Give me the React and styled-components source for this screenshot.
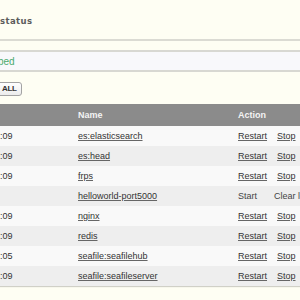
import React from 'react'
import styled, {createGlobalStyle} from 'styled-components'

const GlobalStyle = createGlobalStyle`
  html, body {
    margin: 0;
    padding: 0;
    background: #fefef3;
  }
  body {
    font-family: "Liberation Sans", Arial, sans-serif;
    overflow: hidden;
  }
`

const Page = styled.div`
  width: 300px;
  height: 300px;
  overflow: hidden;
  display: flex;
  flex-direction: column;
`

const Title = styled.h2`
  margin: 0;
  height: 39px;
  display: flex;
  align-items: center;
  padding-top: 2px;
  box-sizing: border-box;
  font-family: "DejaVu Sans", Verdana, sans-serif;
  font-size: 8.5px;
  font-weight: bold;
  letter-spacing: 0.4px;
  color: #5c5c5c;
`

const Rule = styled.div`
  height: 2px;
  background: #dbdbd3;
`

const Message = styled.div`
  margin-top: 9px;
  height: 18px;
  border-top: 2px solid #d8d8d2;
  border-bottom: 2px solid #d8d8d2;
  background: #f8f8fb;
  display: flex;
  align-items: center;
  font-size: 10px;
  color: #4aa96c;
  text-indent: -2px;
`

const Toolbar = styled.div`
  margin-top: 10px;
  display: flex;
`

const Button = styled.button`
  margin: 0 0 0 -5px;
  height: 14px;
  padding: 0 4px 0 6px;
  border: 1px solid #a3a3a3;
  border-radius: 3px;
  background: linear-gradient(#ffffff, #ececec);
  font-family: "Liberation Sans", Arial, sans-serif;
  font-size: 8px;
  font-weight: bold;
  letter-spacing: -0.3px;
  color: #333;
  line-height: 12px;
`

const Table = styled.div`
  margin-top: 8px;
  width: 320px;
  box-shadow: 0 1px 1px rgba(0, 0, 0, 0.18);
`

const Row = styled.div`
  display: grid;
  grid-template-columns: 74px 160px 1fr;
  height: ${p => (p.$head ? '22px' : '20px')};
  align-items: center;
  font-size: 9px;
  background: ${p => (p.$head ? '#8b8b8b' : p.$odd ? '#f9f9f9' : '#eeeeee')};
  color: ${p => (p.$head ? '#f4f4f4' : '#333')};
  font-weight: ${p => (p.$head ? 'bold' : 'normal')};
`

const Cell = styled.div`
  padding-left: ${p => (p.$first ? '0' : '4px')};
  white-space: nowrap;
  display: flex;
  align-items: center;
`

const Link = styled.a`
  color: #333;
  text-decoration: underline;
  text-decoration-color: #666;
  margin-right: ${p => p.$gap || 0}px;
`

const Plain = styled.span`
  color: #444;
  margin-right: ${p => p.$gap || 0}px;
`

const rows = [
  {time: ':09', name: 'es:elasticsearch', running: true},
  {time: ':09', name: 'es:head', running: true},
  {time: ':09', name: 'frps', running: true},
  {time: '', name: 'helloworld-port5000', running: false},
  {time: ':09', name: 'nginx', running: true},
  {time: ':09', name: 'redis', running: true},
  {time: ':05', name: 'seafile:seafilehub', running: true},
  {time: ':09', name: 'seafile:seafileserver', running: true}
]

const App = () => (
  <Page>
    <GlobalStyle />
    <Title>status</Title>
    <Rule />
    <Message>ped</Message>
    <Toolbar>
      <Button>ALL</Button>
    </Toolbar>
    <Table>
      <Row $head>
        <Cell $first />
        <Cell>Name</Cell>
        <Cell>Action</Cell>
      </Row>
      {rows.map((r, i) => (
        <Row key={r.name} $odd={i % 2 === 0}>
          <Cell $first>{r.time}</Cell>
          <Cell>
            <Link href='#'>{r.name}</Link>
          </Cell>
          <Cell>
            {r.running
              ? <>
                <Link href='#' $gap={10}>Restart</Link>
                <Link href='#'>Stop</Link>
              </>
              : <>
                <Plain $gap={17}>Start</Plain>
                <Plain>Clear log</Plain>
              </>}
          </Cell>
        </Row>
      ))}
    </Table>
  </Page>
)

export default App
